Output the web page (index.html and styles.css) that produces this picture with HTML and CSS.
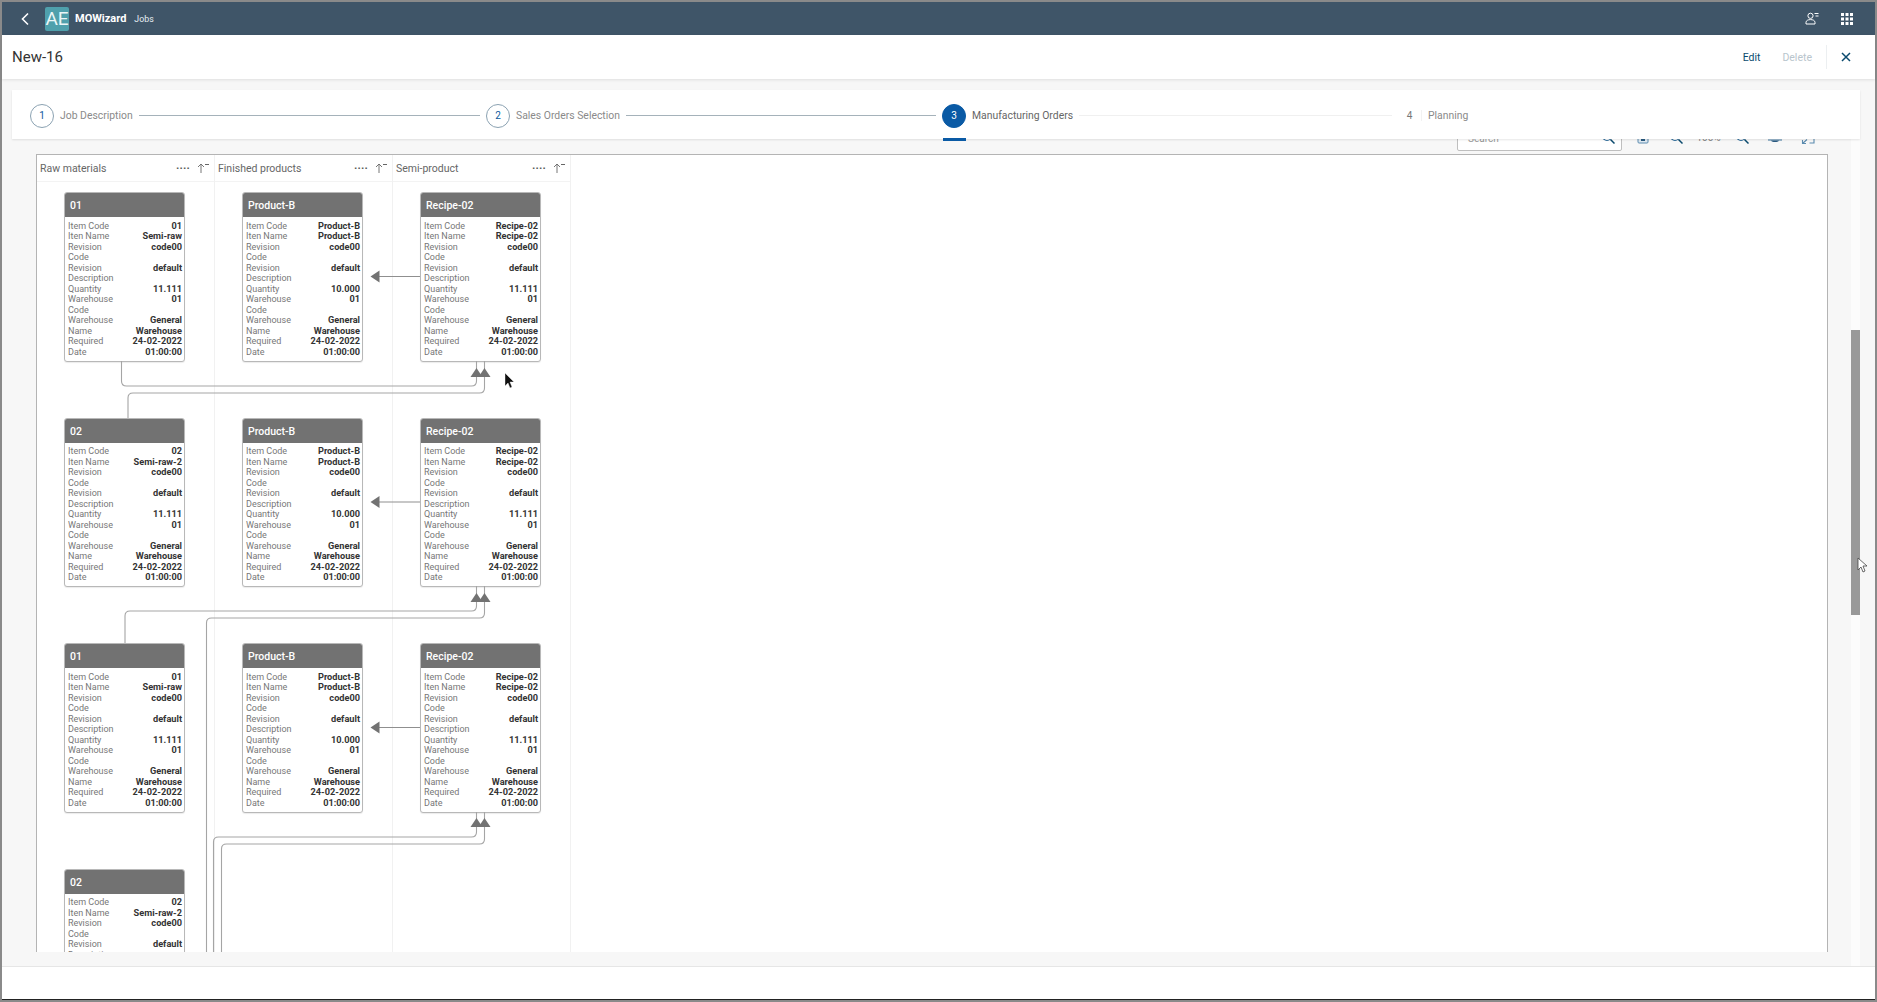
FILE: index.html
```html
<!DOCTYPE html>
<html lang="en">
<head>
<meta charset="utf-8">
<title>MOWizard Jobs</title>
<link rel="stylesheet" href="styles.css">
</head>
<body>
<div class="app">
  <header class="shell">
    <svg class="back" width="10" height="14" viewBox="0 0 10 14"><path d="M8 1.500 2.500 7 8 12.500" fill="none" stroke="#fff" stroke-width="1.600"/></svg>
    <div class="logo">AE</div>
    <span class="app-name">MOWizard</span>
    <span class="app-sub">Jobs</span>
    <div class="shell-end">
      <svg width="14" height="13" viewBox="0 0 14 13"><circle cx="5.500" cy="3.800" r="2.600" fill="none" stroke="#fff" stroke-width="1"/><path d="M1 12v-1.600c0-1.800 2-2.800 4.500-2.800s4.500 1 4.500 2.800V12z" fill="none" stroke="#fff" stroke-width="1"/><path d="M9.500 1.500h4M10.500 4h3" stroke="#fff" stroke-width="1.200"/></svg>
      <svg width="12" height="12" viewBox="0 0 12 12" fill="#fff"><rect width="3" height="3"/><rect x="4.500" width="3" height="3"/><rect x="9" width="3" height="3"/><rect y="4.500" width="3" height="3"/><rect x="4.500" y="4.500" width="3" height="3"/><rect x="9" y="4.500" width="3" height="3"/><rect y="9" width="3" height="3"/><rect x="4.500" y="9" width="3" height="3"/><rect x="9" y="9" width="3" height="3"/></svg>
    </div>
  </header>

  <div class="titlebar">
    <h1>New-16</h1>
    <div class="title-actions">
      <span class="act">Edit</span>
      <span class="act off">Delete</span>
      <span class="sep"></span>
      <svg width="10" height="10" viewBox="0 0 10 10"><path d="M1 1l8 8M9 1l-8 8" stroke="#0a4a6e" stroke-width="1.500"/></svg>
    </div>
  </div>

  <main class="content">
    <nav class="wizard">
      <div class="step s1"><span class="dot">1</span><span class="lbl">Job Description</span><span class="line"></span></div>
      <div class="step s2"><span class="dot">2</span><span class="lbl">Sales Orders Selection</span><span class="line"></span></div>
      <div class="step s3"><span class="dot cur">3</span><span class="lbl dark">Manufacturing Orders</span><span class="line faint"></span><span class="cur-bar"></span></div>
      <div class="step s4"><span class="num">4</span><span class="lbl">Planning</span></div>
    </nav>

    <div class="toolbar">
      <div class="search"><span>Search</span>
        <svg width="14" height="14" viewBox="0 0 14 14"><circle cx="6" cy="6" r="4.500" fill="none" stroke="#2a6a9a" stroke-width="1.200"/><path d="m9.500 9.500 4 4" stroke="#0a4a6e" stroke-width="1.500"/></svg>
      </div>
      <div class="tool"><svg width="14" height="14" viewBox="0 0 14 14"><rect x="2" y="2" width="10" height="11" rx="1" fill="#dfe9f1" stroke="#5c8cb0" stroke-width="1"/><rect x="5" y="9" width="4" height="2" fill="#2a5a80"/></svg></div>
      <div class="tool"><svg width="14" height="14" viewBox="0 0 14 14"><circle cx="6" cy="6" r="4.500" fill="none" stroke="#2a6a9a" stroke-width="1.200"/><path d="m9.500 9.500 4 4" stroke="#0a4a6e" stroke-width="1.500"/></svg></div>
      <div class="tool pct">100%</div>
      <div class="tool"><svg width="14" height="14" viewBox="0 0 14 14"><circle cx="6" cy="6" r="4.500" fill="none" stroke="#2a6a9a" stroke-width="1.200"/><path d="m9.500 9.500 4 4" stroke="#0a4a6e" stroke-width="1.500"/></svg></div>
      <div class="tool"><svg width="14" height="14" viewBox="0 0 14 14"><path d="M0 10h14" stroke="#5c8cb0" stroke-width="1.200"/><path d="M3 10.500c1 2 7 2 8 0z" fill="#2a5a80"/></svg></div>
      <div class="tool"><svg width="14" height="14" viewBox="0 0 14 14"><path d="M6 9.500 1.500 13.500M1.500 10v3.500H5M8.500 13H13V8" fill="none" stroke="#5c8cb0" stroke-width="1.100"/></svg></div>
    </div>

    <section class="canvas">
      <div class="cols">
        <div class="col">
          <div class="col-head"><span class="col-title">Raw materials</span><span class="dots">····</span><svg class="sort" width="12" height="10" viewBox="0 0 12 10"><path d="M4 10V1M1 4l3-3 3 3" fill="none" stroke="#666" stroke-width=".9"/><path d="M8 1.500h4" stroke="#666"/></svg></div>
          <div class="col-body">
            <article class="card"><div class="card-head">01</div><dl class="rows"><dt>Item Code</dt><dd>01</dd><dt>Iten Name</dt><dd>Semi-raw</dd><dt>Revision Code</dt><dd>code00</dd><dt>Revision Description</dt><dd>default</dd><dt>Quantity</dt><dd>11.111</dd><dt>Warehouse Code</dt><dd>01</dd><dt>Warehouse Name</dt><dd>General Warehouse</dd><dt>Required Date</dt><dd>24-02-2022 01:00:00</dd></dl></article>
            <article class="card"><div class="card-head">02</div><dl class="rows"><dt>Item Code</dt><dd>02</dd><dt>Iten Name</dt><dd>Semi-raw-2</dd><dt>Revision Code</dt><dd>code00</dd><dt>Revision Description</dt><dd>default</dd><dt>Quantity</dt><dd>11.111</dd><dt>Warehouse Code</dt><dd>01</dd><dt>Warehouse Name</dt><dd>General Warehouse</dd><dt>Required Date</dt><dd>24-02-2022 01:00:00</dd></dl></article>
            <article class="card"><div class="card-head">01</div><dl class="rows"><dt>Item Code</dt><dd>01</dd><dt>Iten Name</dt><dd>Semi-raw</dd><dt>Revision Code</dt><dd>code00</dd><dt>Revision Description</dt><dd>default</dd><dt>Quantity</dt><dd>11.111</dd><dt>Warehouse Code</dt><dd>01</dd><dt>Warehouse Name</dt><dd>General Warehouse</dd><dt>Required Date</dt><dd>24-02-2022 01:00:00</dd></dl></article>
            <article class="card"><div class="card-head">02</div><dl class="rows"><dt>Item Code</dt><dd>02</dd><dt>Iten Name</dt><dd>Semi-raw-2</dd><dt>Revision Code</dt><dd>code00</dd><dt>Revision Description</dt><dd>default</dd><dt>Quantity</dt><dd>11.111</dd><dt>Warehouse Code</dt><dd>01</dd><dt>Warehouse Name</dt><dd>General Warehouse</dd><dt>Required Date</dt><dd>24-02-2022 01:00:00</dd></dl></article>
          </div>
        </div>
        <div class="col">
          <div class="col-head"><span class="col-title">Finished products</span><span class="dots">····</span><svg class="sort" width="12" height="10" viewBox="0 0 12 10"><path d="M4 10V1M1 4l3-3 3 3" fill="none" stroke="#666" stroke-width=".9"/><path d="M8 1.500h4" stroke="#666"/></svg></div>
          <div class="col-body">
            <article class="card"><div class="card-head">Product-B</div><dl class="rows"><dt>Item Code</dt><dd>Product-B</dd><dt>Iten Name</dt><dd>Product-B</dd><dt>Revision Code</dt><dd>code00</dd><dt>Revision Description</dt><dd>default</dd><dt>Quantity</dt><dd>10.000</dd><dt>Warehouse Code</dt><dd>01</dd><dt>Warehouse Name</dt><dd>General Warehouse</dd><dt>Required Date</dt><dd>24-02-2022 01:00:00</dd></dl></article>
            <article class="card"><div class="card-head">Product-B</div><dl class="rows"><dt>Item Code</dt><dd>Product-B</dd><dt>Iten Name</dt><dd>Product-B</dd><dt>Revision Code</dt><dd>code00</dd><dt>Revision Description</dt><dd>default</dd><dt>Quantity</dt><dd>10.000</dd><dt>Warehouse Code</dt><dd>01</dd><dt>Warehouse Name</dt><dd>General Warehouse</dd><dt>Required Date</dt><dd>24-02-2022 01:00:00</dd></dl></article>
            <article class="card"><div class="card-head">Product-B</div><dl class="rows"><dt>Item Code</dt><dd>Product-B</dd><dt>Iten Name</dt><dd>Product-B</dd><dt>Revision Code</dt><dd>code00</dd><dt>Revision Description</dt><dd>default</dd><dt>Quantity</dt><dd>10.000</dd><dt>Warehouse Code</dt><dd>01</dd><dt>Warehouse Name</dt><dd>General Warehouse</dd><dt>Required Date</dt><dd>24-02-2022 01:00:00</dd></dl></article>
          </div>
        </div>
        <div class="col">
          <div class="col-head"><span class="col-title">Semi-product</span><span class="dots">····</span><svg class="sort" width="12" height="10" viewBox="0 0 12 10"><path d="M4 10V1M1 4l3-3 3 3" fill="none" stroke="#666" stroke-width=".9"/><path d="M8 1.500h4" stroke="#666"/></svg></div>
          <div class="col-body">
            <article class="card"><div class="card-head">Recipe-02</div><dl class="rows"><dt>Item Code</dt><dd>Recipe-02</dd><dt>Iten Name</dt><dd>Recipe-02</dd><dt>Revision Code</dt><dd>code00</dd><dt>Revision Description</dt><dd>default</dd><dt>Quantity</dt><dd>11.111</dd><dt>Warehouse Code</dt><dd>01</dd><dt>Warehouse Name</dt><dd>General Warehouse</dd><dt>Required Date</dt><dd>24-02-2022 01:00:00</dd></dl></article>
            <article class="card"><div class="card-head">Recipe-02</div><dl class="rows"><dt>Item Code</dt><dd>Recipe-02</dd><dt>Iten Name</dt><dd>Recipe-02</dd><dt>Revision Code</dt><dd>code00</dd><dt>Revision Description</dt><dd>default</dd><dt>Quantity</dt><dd>11.111</dd><dt>Warehouse Code</dt><dd>01</dd><dt>Warehouse Name</dt><dd>General Warehouse</dd><dt>Required Date</dt><dd>24-02-2022 01:00:00</dd></dl></article>
            <article class="card"><div class="card-head">Recipe-02</div><dl class="rows"><dt>Item Code</dt><dd>Recipe-02</dd><dt>Iten Name</dt><dd>Recipe-02</dd><dt>Revision Code</dt><dd>code00</dd><dt>Revision Description</dt><dd>default</dd><dt>Quantity</dt><dd>11.111</dd><dt>Warehouse Code</dt><dd>01</dd><dt>Warehouse Name</dt><dd>General Warehouse</dd><dt>Required Date</dt><dd>24-02-2022 01:00:00</dd></dl></article>
          </div>
        </div>
      </div>
      <svg class="links" width="1790" height="797" viewBox="37 155 1790 797">
        <g fill="none" stroke="#a5a5a5" stroke-width="1.100">
          <path d="M121.500 361V381q0 5 5 5H471.500q5 0 5-5V361"/>
          <path d="M128 418V398q0-5 5-5H479.500q5 0 5-5V361"/>
          <path d="M125 643V616q0-5 5-5H471.500q5 0 5-5V586"/>
          <path d="M206.500 952V623q0-5 5-5H479.500q5 0 5-5V586"/>
          <path d="M213.500 952V842q0-5 5-5H471.500q5 0 5-5V812"/>
          <path d="M221.500 952V849q0-5 5-5H479.500q5 0 5-5V812"/>
          <path d="M379 276.500H420M379 502H420M379 727.500H420" stroke="#8f8f8f"/>
        </g>
        <g fill="#727272">
          <path d="M476.500 368l6 9H470.500z"/><path d="M484.500 368l6 9H478.500z"/>
          <path d="M476.500 593l6 9H470.500z"/><path d="M484.500 593l6 9H478.500z"/>
          <path d="M476.500 818l6 9H470.500z"/><path d="M484.500 818l6 9H478.500z"/>
          <path d="M370.500 276.500l9-6v12z"/><path d="M370.500 502l9-6v12z"/><path d="M370.500 727.500l9-6v12z"/>
        </g>
        <path d="M505 373v13l3-3 2 5 2-1-2-5h4z" fill="#111" stroke="#fff" stroke-width=".4"/>
      </svg>
    </section>

    <div class="scroll"><div class="thumb"></div></div>
    <svg class="pointer" width="11" height="16" viewBox="0 0 11 16"><path d="M1 1v12l3-3 2 5 2-1-2-5h4z" fill="#fff" stroke="#444" stroke-width=".8"/></svg>
  </main>

  <footer class="foot"></footer>
</div>
</body>
</html>
```
FILE: styles.css
```css
* { box-sizing: border-box; }
html, body { margin: 0; height: 100%; }
body { background: #8a8a8a; overflow: hidden; font-family: Roboto, "Open Sans", "Liberation Sans", sans-serif; }
.app { height: 1002px; padding: 2px 2px 2px 2px; display: flex; flex-direction: column; }

.shell { height: 33px; flex: none; background: #3f5568; color: #fff; display: flex; align-items: center; padding-left: 18px; }
.back { margin-right: 15px; }
.logo { width: 24px; height: 24px; background: #4fa0ac; border-radius: 2px; color: #eaf6f7; font-size: 19px; line-height: 24px; text-align: center; margin-right: 6px; }
.app-name { font-size: 11px; font-weight: 700; margin-right: 8px; }
.app-sub { font-size: 8.800px; color: #e6edf2; }
.shell-end { margin-left: auto; display: flex; align-items: center; gap: 22px; padding-right: 22px; }

.titlebar { height: 44px; flex: none; background: #fff; display: flex; align-items: center; padding-left: 10px; box-shadow: 0 1px 3px rgba(0,0,0,.1); position: relative; z-index: 3; }
.titlebar h1 { margin: 0; font-size: 15px; font-weight: 400; color: #333; }
.title-actions { margin-left: auto; display: flex; align-items: center; padding-right: 24px; }
.act { font-size: 10.500px; color: #0a4a6e; margin-right: 22px; }
.act.off { color: #b9c5cd; margin-right: 14px; }
.sep { width: 1px; height: 24px; background: #eceff1; margin-right: 14px; }

.content { flex: 1; min-height: 0; background: #f7f7f7; position: relative; overflow: hidden; padding-top: 11px; }

.wizard { height: 49px; margin: 0 15px 0 10px; background: #fff; box-shadow: 0 1px 2px rgba(0,0,0,.1); display: flex; align-items: center; padding: 2px 0 0 18px; position: relative; z-index: 2; }
.step { display: flex; align-items: center; position: relative; height: 100%; }
.s1 { width: 456px; }
.s2 { width: 456px; }
.s3 { width: 456px; }
.dot { width: 24px; height: 24px; flex: none; border-radius: 50%; border: 1px solid #8ba2b2; color: #0a5a9e; font-size: 10px; display: flex; align-items: center; justify-content: center; background: #fff; }
.dot.cur { background: #0a5aa5; border-color: #0a5aa5; color: #fff; }
.num { width: 24px; flex: none; font-size: 10px; color: #777; text-align: center; border-right: 1px solid #f2f2f2; }
.lbl { font-size: 10.400px; color: #8a8a8a; margin-left: 6px; white-space: nowrap; }
.lbl.dark { color: #666; }
.line { flex: 1; height: 1px; background: #a5b2ba; margin: 0 6px; }
.line.faint { background: #f0f0f0; }
.cur-bar { position: absolute; left: 1px; bottom: -2px; width: 23px; height: 3px; background: #0a5aa5; }

.toolbar { height: 12px; display: flex; justify-content: flex-end; align-items: flex-end; overflow: hidden; padding-right: 51px; }
.search { width: 165px; height: 25px; flex: none; background: #fff; border: 1px solid #bfbfbf; border-radius: 2px; margin-right: 4px; display: flex; align-items: center; justify-content: space-between; padding: 0 6px 0 10px; font-size: 10px; color: #999; }
.search svg { position: relative; top: -2px; }
.tool { width: 33px; height: 14px; margin-bottom: 7px; flex: none; display: flex; justify-content: center; }
.pct { font-size: 10px; color: #888; line-height: 10px; height: 10px; margin-bottom: 8px; }

.canvas { margin: 3px 47px 0 34px; height: 798px; background: #fff; border: 1px solid #b4b4b4; border-bottom: 0; position: relative; overflow: hidden; }
.cols { display: flex; height: 100%; }
.col { width: 178px; flex: none; border-right: 1px solid #f1f1f1; }
.col-head { height: 27px; display: flex; align-items: center; border-bottom: 1px solid #f3f3f3; padding: 0 5px 0 3px; font-size: 10.500px; color: #666; }
.col-title { flex: 1; }
.dots { font-size: 11px; font-weight: 700; color: #555; letter-spacing: .2px; margin-right: 7px; }
.sort { flex: none; }
.col-body { padding: 10px 0 0 27px; }

.card { width: 121px; height: 169.500px; margin-bottom: 56px; border: 1px solid #b8b8b8; border-radius: 3px; background: #fff; box-shadow: 0 1px 1px rgba(0,0,0,.08); overflow: hidden; }
.card-head { height: 24px; background: #727272; color: #fff; font-size: 10.500px; font-weight: 500; line-height: 26px; padding-left: 5px; }
.rows { margin: 0; padding: 3.500px 2px 0 3px; display: grid; grid-template-columns: 48px 1fr; line-height: 10.500px; }
.rows dt { color: #777; font-size: 9px; }
.rows dd { margin: 0; padding-left: 5px; color: #333; font-size: 9.200px; font-weight: 700; text-align: right; }

.links { position: absolute; left: 0; top: 0; pointer-events: none; }

.scroll { position: absolute; left: 1849px; top: 45px; width: 9px; height: 887px; background: #fcfcfc; }
.thumb { margin-top: 206px; height: 285px; background: #999; }
.pointer { position: absolute; left: 1855px; top: 478px; }

.foot { height: 34px; flex: none; background: #fff; border-top: 1px solid #e6e6e6; border-bottom: 1px solid #222; }
```
